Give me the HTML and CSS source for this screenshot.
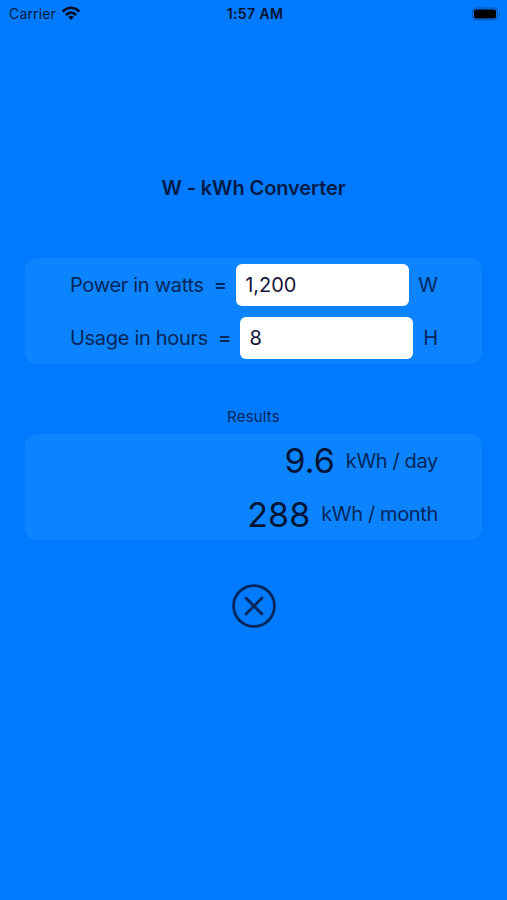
FILE: index.html
```html
<!DOCTYPE html>
<html lang="en">

<head>
    <meta charset="UTF-8">
    <meta name="viewport" content="width=device-width, initial-scale=1.0">
    <title>W - kWh Converter</title>
    <link rel="stylesheet" href="styles.css">
</head>

<body>
    <header class="status">
        <div class="carrier">
            <span>Carrier</span>
            <svg class="wifi" viewBox="0 0 20 15">
                <path d="M1.7 5.5 Q10 -2 18.3 5.5" />
                <path d="M4.8 9 Q10 4.2 15.2 9" />
                <path class="dot" d="M7.2 11.1 Q10 8.6 12.8 11.1 L10 14 Z" />
            </svg>
        </div>
        <div class="time">1:57 AM</div>
        <svg class="battery" viewBox="0 0 30 14">
            <rect class="case" x="1.5" y="1" width="25" height="12" rx="3" />
            <rect class="level" x="3" y="2.5" width="22" height="9" rx="1.8" />
            <path class="tip" d="M28 5 Q30 7 28 9 Z" />
        </svg>
    </header>
    <main class="main">
        <h1 class="title">W - kWh Converter</h1>
        <form class="card">
            <div class="row">
                <label class="label" for="watts">Power in watts</label>
                <span class="equal">=</span>
                <input class="field" id="watts" type="text" value="1,200">
                <span class="unit">W</span>
            </div>
            <div class="row">
                <label class="label" for="hours">Usage in hours</label>
                <span class="equal">=</span>
                <input class="field" id="hours" type="text" value="8">
                <span class="unit">H</span>
            </div>
        </form>
        <h2 class="subtitle">Results</h2>
        <div class="card">
            <div class="row result">
                <span class="value">9.6</span>
                <span class="unit">kWh / day</span>
            </div>
            <div class="row result">
                <span class="value">288</span>
                <span class="unit">kWh / month</span>
            </div>
        </div>
        <button class="clear" type="button" aria-label="Clear">
            <svg viewBox="0 0 44 44">
                <circle cx="22" cy="22" r="20.4" />
                <path d="M14 14 L30 30 M30 14 L14 30" />
            </svg>
        </button>
    </main>
</body>

</html>
```

FILE: styles.css
```css
* {
    margin: 0;
    padding: 0;
    box-sizing: border-box;
}

body {
    min-height: 100vh;
    background-color: #007aff;
    color: #04265a;
    font-family: Inter, "Liberation Sans", sans-serif;
}

.status {
    display: grid;
    grid-template-columns: 1fr auto 1fr;
    align-items: center;
    height: 27px;
    padding: 0 6px 0 9px;
    color: #021c40;
    font-size: 14px;
}

.carrier {
    display: flex;
    align-items: center;
    gap: 5px;
    letter-spacing: .15px;
}

.wifi {
    width: 20px;
    height: 15px;
    fill: none;
    stroke: #000c20;
    stroke-width: 2.6;
}

.wifi .dot {
    fill: #000c20;
    stroke: none;
}

.time {
    color: #001230;
    font-weight: 600;
    letter-spacing: .4px;
}

.battery {
    justify-self: end;
    width: 30px;
    height: 14px;
}

.case {
    fill: none;
    stroke: #0053ad;
}

.level {
    fill: #000;
}

.tip {
    fill: #0053ad;
}

.main {
    display: flex;
    flex-direction: column;
    align-items: center;
    padding: 146px 25px 0;
}

.title {
    height: 30px;
    color: #031b46;
    font-size: 20px;
    font-weight: 600;
    letter-spacing: -.1px;
    line-height: 30px;
}

.card {
    width: 100%;
    height: 106px;
    padding: 0 44px 0 45px;
    border-radius: 12px;
    background-color: #0c84ff;
}

.title + .card {
    margin-top: 55px;
}

.row {
    display: flex;
    align-items: center;
    height: 53px;
    font-size: 20px;
    white-space: nowrap;
}

.label {
    flex: none;
    letter-spacing: -.3px;
}

.equal {
    margin: 0 9px 0 10px;
    font-weight: 500;
}

.field {
    flex: none;
    width: 173px;
    height: 42px;
    padding: 0 9px;
    border: none;
    border-radius: 6px;
    background-color: #fff;
    color: #17153b;
    font: inherit;
}

.unit {
    margin-left: auto;
}

.subtitle {
    height: 24px;
    margin: 41px 0 5px;
    font-size: 15px;
    font-weight: 400;
    letter-spacing: .2px;
    line-height: 24px;
}

.result {
    justify-content: flex-end;
    height: 53.5px;
}

.value {
    color: #021536;
    font-size: 34px;
}

.result .unit {
    margin-left: 11px;
    letter-spacing: -.35px;
}

.clear {
    width: 44px;
    height: 44px;
    margin-top: 44px;
    border: none;
    background: none;
}

.clear svg {
    display: block;
    fill: none;
    stroke: #04265a;
    stroke-width: 2.8;
    stroke-linecap: round;
}
```
